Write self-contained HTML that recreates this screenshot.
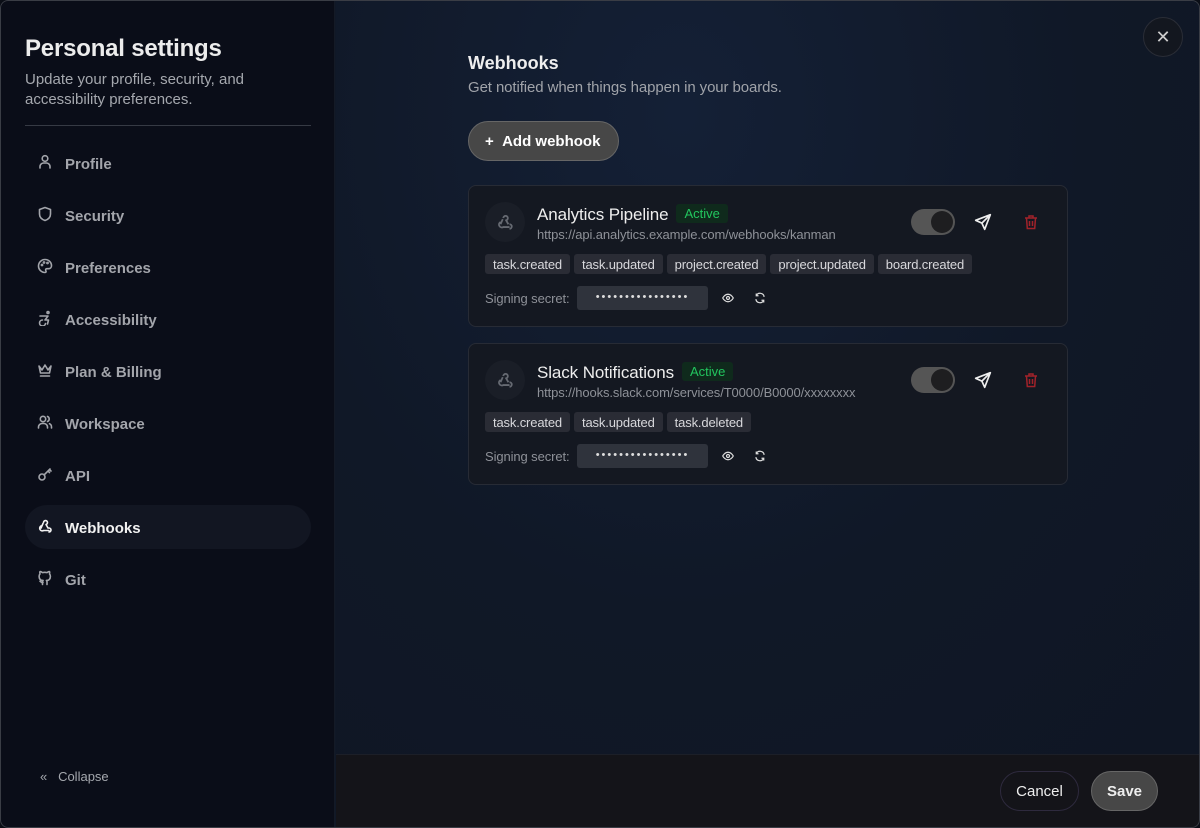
<!DOCTYPE html>
<html><head><meta charset="utf-8"><style>
*{box-sizing:border-box;margin:0;padding:0}
body{width:1200px;height:828px;background:#0b0e16;font-family:"Liberation Sans",sans-serif;overflow:hidden;position:relative}
.frame{position:absolute;inset:0;border-radius:8px;overflow:hidden;background:#101827}
.frame:after{content:"";position:absolute;inset:0;border:1px solid #3a3d45;border-radius:8px;pointer-events:none;z-index:10}
.side{position:absolute;left:0;top:0;width:335px;height:828px;background:#0a0d18;border-right:1px solid #141a26}
.side h1{position:absolute;left:25px;top:35px;font-size:24px;font-weight:bold;color:#ececec;letter-spacing:-0.2px}
.side .sub{position:absolute;left:25px;top:70px;font-size:15px;line-height:20px;color:#a5a8ae;width:260px}
.side .hr{position:absolute;left:25px;top:125px;width:286px;height:1px;background:#363a44}
.nav{position:absolute;left:25px;width:286px;height:44px;border-radius:22px;display:flex;align-items:center;padding-left:12px;padding-top:2px;font-size:15px;font-weight:bold;color:#a3a5ab}
.nav svg{width:16px;height:16px;margin-right:12px;margin-top:-4px;stroke:#a3a5ab;fill:none;stroke-width:1.6;stroke-linecap:round;stroke-linejoin:round}
.nav.act{background:#121622;color:#f2f2f2}
.nav.act svg{stroke:#f2f2f2}
.collapse{position:absolute;left:40px;top:769px;font-size:13px;color:#a5a8ae}
.main{position:absolute;left:336px;top:0;right:0;height:754px;background:radial-gradient(ellipse at 40% 15%,#142036 0%,#101827 55%,#0f1624 100%)}
.foot{position:absolute;left:336px;top:754px;right:0;bottom:0;background:#141419;border-top:1px solid #1c1f28}
.close{position:absolute;left:1143px;top:17px;width:40px;height:40px;border-radius:50%;border:1px solid #2a2d36;background:#13171f;color:#ccc;font-size:18px;text-align:center;line-height:38px}
h2{position:absolute;left:468px;top:53px;font-size:18px;font-weight:bold;color:#eee}
.desc{position:absolute;left:468px;top:79px;font-size:15px;color:#a0a3a9;letter-spacing:-0.1px}
.add{position:absolute;left:468px;top:121px;width:151px;height:40px;border-radius:20px;background:#474747;border:1px solid #666;color:#fff;font-size:15px;font-weight:bold;line-height:40px;padding-left:16px}
.card{position:absolute;left:468px;width:600px;height:142px;border:1px solid #272b35;border-radius:8px;background:#141821}
.ic{position:absolute;left:16px;top:16px;width:40px;height:40px;border-radius:50%;background:#1a1e27}
.ic svg{position:absolute;left:11px;top:11px;width:18px;height:18px;stroke:#666a72;fill:none;stroke-width:1.6}
.t{position:absolute;left:68px;top:18px;font-size:17px;color:#eee;letter-spacing:-0.1px}
.badge{display:inline-block;margin-left:8px;font-size:13px;color:#22c55e;background:#0f2a1c;padding:2px 8px;border-radius:3px;vertical-align:2px;letter-spacing:0}
.url{position:absolute;left:68px;top:41px;font-size:13px;color:#8e9198;letter-spacing:-0.1px}
.tog{position:absolute;left:442px;top:23px;width:44px;height:26px;border-radius:13px;background:#555}
.tog:after{content:"";position:absolute;right:2px;top:2px;width:22px;height:22px;border-radius:50%;background:#1e1e20}
.send{position:absolute;left:505px;top:27px}
.trash{position:absolute;left:554px;top:27px}
.tags{position:absolute;left:16px;top:68px;display:flex;gap:4px}
.tags span{background:#2a2c35;color:#d8d8dc;font-size:13px;padding:3px 8px 1px;border-radius:3px;height:20px;line-height:16px;letter-spacing:-0.15px}
.sec{position:absolute;left:16px;top:100px;height:24px;width:320px;font-size:13px;color:#8e9198}
.sec .l{position:absolute;left:0;top:5px;letter-spacing:-0.1px}
.dots{position:absolute;left:92px;top:0;width:131px;background:#2f333c;color:#ddd;text-align:center;height:24px;line-height:22px;border-radius:3px;letter-spacing:2px;font-size:11px}
.sec svg{position:absolute;top:6px}
.btn{position:absolute;top:771px;height:40px;border-radius:20px;font-size:15px;color:#eee;line-height:40px;text-align:center}
</style></head><body><div class="frame">
<div class="side">
<h1>Personal settings</h1>
<div class="sub">Update your profile, security, and accessibility preferences.</div>
<div class="hr"></div>
<div class="nav" style="top:141px"><svg viewBox="0 0 16 16"><circle cx="8" cy="4.5" r="2.8"/><path d="M3 14v-1.5a3.5 3.5 0 0 1 3.5-3.5h3A3.5 3.5 0 0 1 13 12.5V14"/></svg>Profile</div>
<div class="nav" style="top:193px"><svg viewBox="0 0 16 16"><path d="M8 1.5 13.5 3.5v4.5c0 3.5-2.5 5.5-5.5 6.5C5 13.5 2.5 11.5 2.5 8V3.5z"/></svg>Security</div>
<div class="nav" style="top:245px"><svg viewBox="0 0 16 16"><path d="M8 1.5a6.5 6.5 0 0 0 0 13c1.2 0 1.3-1 .8-1.8-.6-.9 0-2 1-2h1.8c1.7 0 2.9-1.3 2.9-3C14.5 4.2 11.6 1.5 8 1.5z"/><circle cx="5" cy="7" r=".6"/><circle cx="7" cy="4.5" r=".6"/><circle cx="10.5" cy="5" r=".6"/></svg>Preferences</div>
<div class="nav" style="top:297px"><svg viewBox="0 0 16 16"><circle cx="11" cy="2.5" r="1"/><path d="M3 6h8l-3 4h3.5l-1 4M5.5 10a3 3 0 1 0 3 3.5"/></svg>Accessibility</div>
<div class="nav" style="top:349px"><svg viewBox="0 0 16 16"><path d="M2 4l3 4 3-5 3 5 3-4-1.5 7h-9zM3.5 14h9"/></svg>Plan &amp; Billing</div>
<div class="nav" style="top:401px"><svg viewBox="0 0 16 16"><circle cx="6" cy="5" r="2.7"/><path d="M1.5 14v-1a3.5 3.5 0 0 1 3.5-3.5h2a3.5 3.5 0 0 1 3.5 3.5v1M10.5 2.5a2.7 2.7 0 0 1 0 5M12.5 9.7a3.5 3.5 0 0 1 2 3.3v1"/></svg>Workspace</div>
<div class="nav" style="top:453px"><svg viewBox="0 0 16 16"><circle cx="5" cy="11" r="3"/><path d="M7.2 8.8 13 3M11 5l1.5 1.5M12.5 3.5 14 5"/></svg>API</div>
<div class="nav act" style="top:505px"><svg viewBox="0 0 16 16"><path d="M6.5 4.5a2 2 0 1 1 2.5 2L11 10M4 8a2.5 2.5 0 1 0 2.5 4.5H12M12 10a2 2 0 1 1 0 4M6 5.5 4 10"/></svg>Webhooks</div>
<div class="nav" style="top:557px"><svg viewBox="0 0 16 16"><path d="M10 14.5v-2.5a2 2 0 0 0-.6-1.6c2 0 4-1 4-4.2a3.2 3.2 0 0 0-.9-2.3 3 3 0 0 0 0-2.3s-.8-.2-2.5 1a8.6 8.6 0 0 0-4.5 0C3.8 1.4 3 1.6 3 1.6a3 3 0 0 0 0 2.3 3.2 3.2 0 0 0-.9 2.3c0 3.2 2 4.2 4 4.2a2 2 0 0 0-.6 1.6v2.5M6 12.5c-2 .6-2-1-3-1.2"/></svg>Git</div>
<div class="collapse">«&nbsp;&nbsp;&nbsp;Collapse</div>
</div>
<div class="main"></div>
<div class="foot"></div>
<div class="close">✕</div>
<h2>Webhooks</h2>
<div class="desc">Get notified when things happen in your boards.</div>
<div class="add">+&nbsp;&nbsp;Add webhook</div>

<div class="card" style="top:185px">
<div class="ic"><svg viewBox="0 0 16 16"><path d="M6.5 4.5a2 2 0 1 1 2.5 2L11 10M4 8a2.5 2.5 0 1 0 2.5 4.5H12M12 10a2 2 0 1 1 0 4M6 5.5 4 10"/></svg></div>
<div class="t">Analytics Pipeline<span class="badge">Active</span></div>
<div class="url">https://api.analytics.example.com/webhooks/kanman</div>
<div class="tog"></div>
<svg class="send" width="18" height="18" viewBox="0 0 16 16" fill="none" stroke="#eee" stroke-width="1.5" stroke-linejoin="round"><path d="M14.5 1.5 1.5 6.5l5.5 2.5 2.5 5.5zM7 9l7.5-7.5"/></svg>
<svg class="trash" width="16" height="18" viewBox="0 0 16 16" fill="none" stroke="#a1222a" stroke-width="1.5"><path d="M2 4h12M6 4V2h4v2M3.5 4l.8 10.5h7.4L12.5 4M6.5 7v5M9.5 7v5"/></svg>
<div class="tags"><span>task.created</span><span>task.updated</span><span>project.created</span><span>project.updated</span><span>board.created</span></div>
<div class="sec"><span class="l">Signing secret:</span><span class="dots">••••••••••••••••</span>
<svg style="left:237px" width="12" height="12" viewBox="0 0 16 16" fill="none" stroke="#ddd" stroke-width="1.6"><path d="M1 8s2.5-5 7-5 7 5 7 5-2.5 5-7 5-7-5-7-5z"/><circle cx="8" cy="8" r="2"/></svg>
<svg style="left:269px" width="12" height="12" viewBox="0 0 16 16" fill="none" stroke="#ddd" stroke-width="1.6"><path d="M13.5 6.5A5.5 5.5 0 0 0 3 5M2.5 9.5A5.5 5.5 0 0 0 13 11M3 2v3h3M13 14v-3h-3"/></svg></div>
</div>

<div class="card" style="top:343px">
<div class="ic"><svg viewBox="0 0 16 16"><path d="M6.5 4.5a2 2 0 1 1 2.5 2L11 10M4 8a2.5 2.5 0 1 0 2.5 4.5H12M12 10a2 2 0 1 1 0 4M6 5.5 4 10"/></svg></div>
<div class="t">Slack Notifications<span class="badge">Active</span></div>
<div class="url">https://hooks.slack.com/services/T0000/B0000/xxxxxxxx</div>
<div class="tog"></div>
<svg class="send" width="18" height="18" viewBox="0 0 16 16" fill="none" stroke="#eee" stroke-width="1.5" stroke-linejoin="round"><path d="M14.5 1.5 1.5 6.5l5.5 2.5 2.5 5.5zM7 9l7.5-7.5"/></svg>
<svg class="trash" width="16" height="18" viewBox="0 0 16 16" fill="none" stroke="#a1222a" stroke-width="1.5"><path d="M2 4h12M6 4V2h4v2M3.5 4l.8 10.5h7.4L12.5 4M6.5 7v5M9.5 7v5"/></svg>
<div class="tags"><span>task.created</span><span>task.updated</span><span>task.deleted</span></div>
<div class="sec"><span class="l">Signing secret:</span><span class="dots">••••••••••••••••</span>
<svg style="left:237px" width="12" height="12" viewBox="0 0 16 16" fill="none" stroke="#ddd" stroke-width="1.6"><path d="M1 8s2.5-5 7-5 7 5 7 5-2.5 5-7 5-7-5-7-5z"/><circle cx="8" cy="8" r="2"/></svg>
<svg style="left:269px" width="12" height="12" viewBox="0 0 16 16" fill="none" stroke="#ddd" stroke-width="1.6"><path d="M13.5 6.5A5.5 5.5 0 0 0 3 5M2.5 9.5A5.5 5.5 0 0 0 13 11M3 2v3h3M13 14v-3h-3"/></svg></div>
</div>

<div class="btn" style="left:1000px;width:79px;border:1px solid #2e2a3e">Cancel</div>
<div class="btn" style="left:1091px;width:67px;background:#474747;border:1px solid #666;font-weight:bold">Save</div>
</div></body></html>
